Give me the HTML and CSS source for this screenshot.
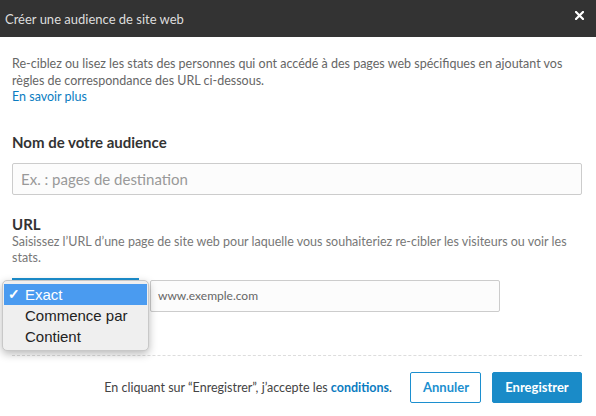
FILE: index.html
```html
<!DOCTYPE html>
<html lang="fr">
<head>
<meta charset="utf-8">
<link rel="stylesheet" href="styles.css">
</head>
<body>
<div class="modal">
  <header class="head">
    <h1 class="title">Créer une audience de site web</h1>
    <span class="close">
      <svg width="9" height="9" viewBox="0 0 9 9"><path d="M1 1L8 8M8 1L1 8" stroke="#fff" stroke-width="2.2" stroke-linecap="square"/></svg>
    </span>
  </header>
  <main class="body">
    <p class="desc">Re-ciblez ou lisez les stats des personnes qui ont accédé à des pages web spécifiques en ajoutant vos règles de correspondance des URL ci-dessous.<br><a class="link" href="#">En savoir plus</a></p>
    <h2 class="label name-label">Nom de votre audience</h2>
    <div class="input big">Ex. : pages de destination</div>
    <h2 class="label url-label">URL</h2>
    <p class="help">Saisissez l’URL d’une page de site web pour laquelle vous souhaiteriez re-cibler les visiteurs ou voir les stats.</p>
    <div class="url-row">
      <div class="select-wrap">
        <div class="select"></div>
        <ul class="menu">
          <li class="opt active"><span class="check">✓</span>Exact</li>
          <li class="opt">Commence par</li>
          <li class="opt">Contient</li>
        </ul>
      </div>
      <div class="input small">www.exemple.com</div>
    </div>
  </main>
  <footer class="foot">
    <p class="terms">En cliquant sur “Enregistrer”, j’accepte les <a class="terms-link" href="#">conditions</a>.</p>
    <button class="btn ghost">Annuler</button>
    <button class="btn primary">Enregistrer</button>
  </footer>
</div>
</body>
</html>
```
FILE: styles.css
```css
* { box-sizing: border-box; }
html, body { margin: 0; padding: 0; background: #fff; }
body { width: 596px; height: 416px; overflow: hidden; font-family: "Source Sans Pro", Lato, "Open Sans", sans-serif; color: #333; }
.modal { display: flex; flex-direction: column; height: 416px; }
.head { height: 37px; background: #333; display: flex; align-items: center; justify-content: space-between; padding: 0 12px 0 5px; }
.title { margin: 0; font-size: 13px; font-weight: 400; color: #ddd; }
.close { display: flex; padding-bottom: 6px; }
.body { padding: 19px 12px 0 12px; }
.desc { margin: 0; font-size: 12.5px; line-height: 16.5px; color: #666; }
.link { color: #0a7cc1; text-decoration: none; }
.label { margin: 0; font-size: 15px; font-weight: 700; color: #333; }
.name-label { margin-top: 27px; }
.input { border: 1px solid #ccc; border-radius: 2px; background: #fcfcfc; color: #999; display: flex; align-items: center; }
.big { margin-top: 12px; height: 32px; width: 570px; padding-left: 8px; font-size: 15px; }
.url-label { margin-top: 20px; }
.help { margin: 1px 0 0; font-size: 12.5px; line-height: 16.5px; color: #777; }
.url-row { display: flex; margin-top: 13px; gap: 11px; }
.select-wrap { position: relative; width: 127px; height: 31px; }
.select { height: 2px; width: 127px; margin-top: -2px; background: #1c8fcf; }
.menu { position: absolute; left: -10px; top: 0; width: 147px; margin: 0; padding: 3px 1px; list-style: none; background: #efefef; border: 1px solid #c8c8c8; border-radius: 5px; box-shadow: 0 3px 8px rgba(0,0,0,0.28); font-family: "Liberation Sans", Arial, sans-serif; font-size: 15px; color: #222; }
.opt { height: 21px; line-height: 21px; padding-left: 21px; position: relative; }
.opt.active { background: #4a9bf0; color: #fff; }
.check { position: absolute; left: 4px; top: 0; font-size: 14px; font-weight: 700; }
.small { width: 350px; height: 32px; padding-left: 7px; font-size: 12px; color: #666; }
.foot { margin: 43px 14px 0 12px; border-top: 1px dashed #ddd; padding-top: 16px; display: flex; align-items: center; justify-content: flex-end; }
.terms { margin: 0 18px 0 0; font-size: 12.5px; color: #444; }
.terms-link { color: #0a7cc1; font-weight: 700; text-decoration: none; }
.btn { height: 31px; border-radius: 2px; font-family: inherit; font-size: 13px; font-weight: 700; padding: 0 12px; }
.ghost { background: #fff; color: #1c8fcf; border: 1px solid #1c8fcf; width: 71px; }
.primary { background: #1a8bc8; color: #fff; border: 1px solid #1a8bc8; margin-left: 11px; width: 90px; }
```
